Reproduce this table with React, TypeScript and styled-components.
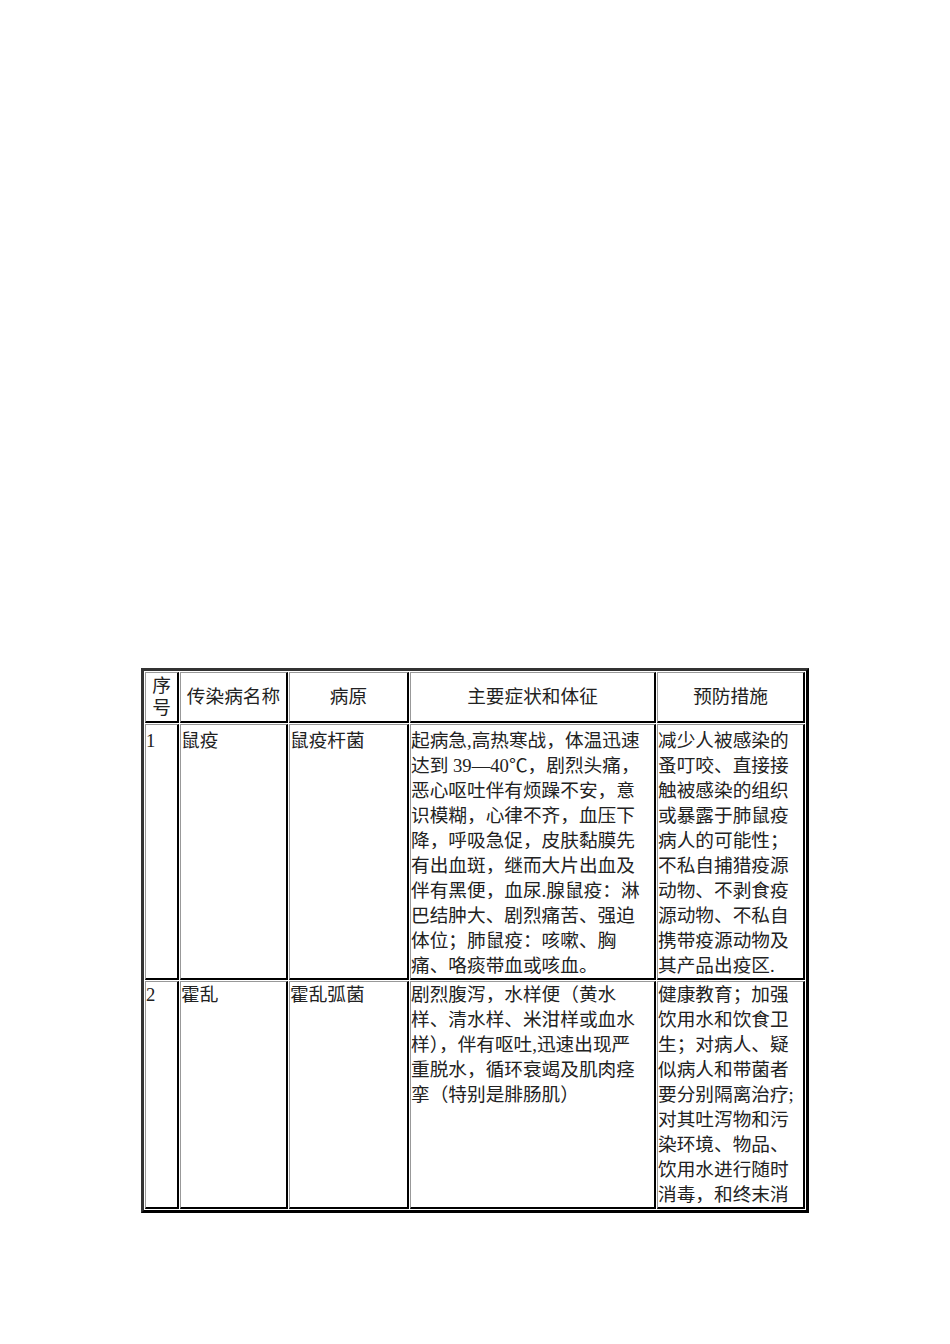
import styled, { createGlobalStyle } from 'styled-components';

const GlobalStyle = createGlobalStyle`
    html, body {
        margin: 0;
        padding: 0;
        background: #FFFFFF;
    }
    body {
        font-family: "Liberation Serif", "Noto Sans CJK SC", serif;
        color: #222;
    }
`;

const Page = styled.div`
    width: 950px;
    height: 1344px;
    padding: 668px 0 0 141px;
    box-sizing: border-box;
    overflow: hidden;
`;

const Table = styled.table`
    table-layout: fixed;
    border-collapse: separate;
    border-spacing: 1px;
    border-style: solid;
    border-width: 3px;
    border-color: #333 #000 #000 #333;
    width: 668px;
`;

const HeadCell = styled.th`
    box-sizing: border-box;
    width: ${(props: any) => props.w}px;
    height: 51px;
    padding: 0;
    border-style: solid;
    border-width: 1px 2px 2px 1px;
    border-color: #999 #000 #000 #999;
    font-weight: normal;
    font-size: 18.67px;
    line-height: 22px;
    text-align: center;
    vertical-align: middle;
`;

const BodyCell = styled.td`
    box-sizing: border-box;
    height: ${(props: any) => props.h}px;
    padding: 0;
    border-style: solid;
    border-width: 1px 2px 2px 1px;
    border-color: #999 #000 #000 #999;
    font-size: 18.67px;
    line-height: 25px;
    text-align: left;
    vertical-align: top;
`;

const Clip = styled.div`
    height: ${(props: any) => props.h}px;
    padding-top: ${(props: any) => props.pt}px;
    box-sizing: border-box;
    overflow: hidden;
`;

const Line = styled.span`
    display: block;
    white-space: nowrap;
`;

const widths = [34, 108, 120, 246, 148];

const rows = [
    {
        height: 256,
        top: 3,
        no: '1',
        name: '鼠疫',
        agent: '鼠疫杆菌',
        symptoms: [
            '起病急,高热寒战，体温迅速',
            '达到 39—40℃，剧烈头痛，',
            '恶心呕吐伴有烦躁不安，意',
            '识模糊，心律不齐，血压下',
            '降，呼吸急促，皮肤黏膜先',
            '有出血斑，继而大片出血及',
            '伴有黑便，血尿.腺鼠疫：淋',
            '巴结肿大、剧烈痛苦、强迫',
            '体位；肺鼠疫：咳嗽、胸',
            '痛、咯痰带血或咳血。',
        ],
        prevention: [
            '减少人被感染的',
            '蚤叮咬、直接接',
            '触被感染的组织',
            '或暴露于肺鼠疫',
            '病人的可能性；',
            '不私自捕猎疫源',
            '动物、不剥食疫',
            '源动物、不私自',
            '携带疫源动物及',
            '其产品出疫区.',
        ],
    },
    {
        height: 228,
        top: 0,
        no: '2',
        name: '霍乱',
        agent: '霍乱弧菌',
        symptoms: [
            '剧烈腹泻，水样便（黄水',
            '样、清水样、米泔样或血水',
            '样），伴有呕吐,迅速出现严',
            '重脱水，循环衰竭及肌肉痉',
            '挛（特别是腓肠肌）',
        ],
        prevention: [
            '健康教育；加强',
            '饮用水和饮食卫',
            '生；对病人、疑',
            '似病人和带菌者',
            '要分别隔离治疗;',
            '对其吐泻物和污',
            '染环境、物品、',
            '饮用水进行随时',
            '消毒，和终末消',
        ],
    },
];

const Cell = ({ h, pt, lines }: { h: number; pt: number; lines: string[] }) => (
    <BodyCell h={h}>
        <Clip h={h - 3} pt={pt}>
            {lines.map((l, i) => (
                <Line key={i}>{l}</Line>
            ))}
        </Clip>
    </BodyCell>
);

const App = () => {
    return (
        <>
            <GlobalStyle />
            <Page>
                <Table>
                    <thead>
                        <tr>
                            <HeadCell w={widths[0]}>序号</HeadCell>
                            <HeadCell w={widths[1]}>传染病名称</HeadCell>
                            <HeadCell w={widths[2]}>病原</HeadCell>
                            <HeadCell w={widths[3]}>主要症状和体征</HeadCell>
                            <HeadCell w={widths[4]}>预防措施</HeadCell>
                        </tr>
                    </thead>
                    <tbody>
                        {rows.map((r) => (
                            <tr key={r.no}>
                                <Cell h={r.height} pt={r.top} lines={[r.no]} />
                                <Cell h={r.height} pt={r.top} lines={[r.name]} />
                                <Cell h={r.height} pt={r.top} lines={[r.agent]} />
                                <Cell h={r.height} pt={r.top} lines={r.symptoms} />
                                <Cell h={r.height} pt={r.top} lines={r.prevention} />
                            </tr>
                        ))}
                    </tbody>
                </Table>
            </Page>
        </>
    );
};

export default App;
